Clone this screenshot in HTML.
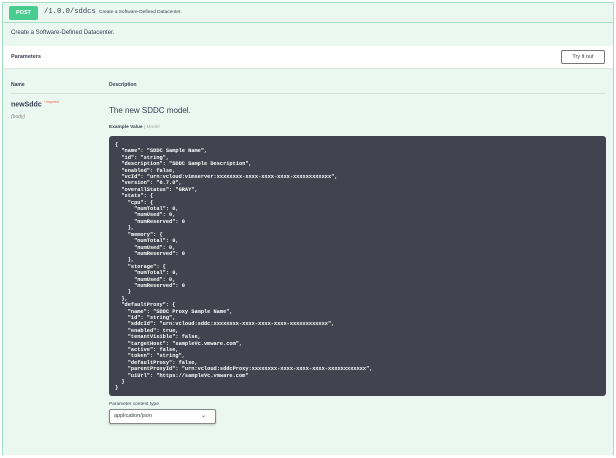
<!DOCTYPE html>
<html><head><meta charset="utf-8"><style>
*{margin:0;padding:0;box-sizing:border-box}
body{width:616px;height:458px;background:#fff;font-family:"Liberation Sans",sans-serif;position:relative;overflow:hidden;color:#3b4151}
.box{position:absolute;left:2px;top:2px;width:612px;height:453px;background:#ebf7f1;border:1px solid #a6dec2;border-bottom:none}
.hdr{position:absolute;left:0;top:0;right:0;height:20px;border-bottom:1px solid #a6dec2}
.post{position:absolute;left:6px;top:3px;width:29px;height:14px;background:#49cc90;color:#fff;font-size:5.5px;font-weight:bold;text-align:center;line-height:14px;border-radius:2px}
.path{position:absolute;left:41px;top:5px;font-family:"Liberation Mono",monospace;font-size:7.2px;color:#3b4151}
.sum{position:absolute;left:96px;top:7px;font-size:4.8px}
.desc{position:absolute;left:8px;top:27px;font-size:6px}
.pbar{position:absolute;left:0;top:43px;right:0;height:22px;background:#fff;box-shadow:0 1px 1px rgba(0,0,0,.08)}
.pbar span{position:absolute;left:8px;top:8px;font-size:5.5px;font-weight:bold}
.try{position:absolute;right:8px;top:4px;width:44px;height:14px;border:1px solid #777;border-radius:2px;font-size:5.5px;text-align:center;line-height:12px;background:#fff}
.th{position:absolute;top:79px;font-size:5px;font-weight:bold}
.line{position:absolute;left:8px;right:8px;top:90px;height:1px;background:#d3e3dc}
.nm{position:absolute;left:8px;top:97px;font-size:7px;font-weight:bold}
.nm sup{color:#e64;font-size:3.5px;font-weight:normal}
.body{position:absolute;left:8px;top:111px;font-size:5px;font-style:italic;color:#888}
.model{position:absolute;left:106px;top:103px;font-size:8px}
.ev{position:absolute;left:106px;top:122px;font-size:4.8px}
.ev b{font-weight:bold}
.code{position:absolute;left:106px;top:133px;width:497px;height:260px;background:#41444e;border-radius:3px;padding:6px 6px;font-family:"Liberation Mono",monospace;font-size:5.3px;line-height:6.4px;color:#fff;font-weight:bold;white-space:pre}
.pct{position:absolute;left:106px;top:399px;font-size:4.8px}
.sel{position:absolute;left:106px;top:406px;width:107px;height:15px;background:#fff;border:1px solid #888;border-radius:2px;font-size:5.5px;line-height:13px;padding-left:4px;box-shadow:0 1px 2px rgba(0,0,0,.2)}
.sel i{position:absolute;right:9px;top:0;font-style:normal;font-size:6px}
</style></head><body>
<div class="box">
<div class="hdr"><div class="post">POST</div><div class="path">/1.0.0/sddcs</div><div class="sum">Create a Software-Defined Datacenter.</div></div>
<div class="desc">Create a Software-Defined Datacenter.</div>
<div class="pbar"><span>Parameters</span><div class="try">Try it out</div></div>
<div class="th" style="left:8px">Name</div><div class="th" style="left:106px">Description</div>
<div class="line"></div>
<div class="nm">newSddc <sup>* required</sup></div>
<div class="body">(body)</div>
<div class="model">The new SDDC model.</div>
<div class="ev"><b>Example Value</b> <span style="color:#aaa">| Model</span></div>
<div class="code">{
  "name": "SDDC Sample Name",
  "id": "string",
  "description": "SDDC Sample Description",
  "enabled": false,
  "vcId": "urn:vcloud:vimserver:xxxxxxxx-xxxx-xxxx-xxxx-xxxxxxxxxxxx",
  "version": "6.7.0",
  "overallStatus": "GRAY",
  "stats": {
    "cpu": {
      "numTotal": 0,
      "numUsed": 0,
      "numReserved": 0
    },
    "memory": {
      "numTotal": 0,
      "numUsed": 0,
      "numReserved": 0
    },
    "storage": {
      "numTotal": 0,
      "numUsed": 0,
      "numReserved": 0
    }
  },
  "defaultProxy": {
    "name": "SDDC Proxy Sample Name",
    "id": "string",
    "sddcId": "urn:vcloud:sddc:xxxxxxxx-xxxx-xxxx-xxxx-xxxxxxxxxxxx",
    "enabled": true,
    "tenantVisible": false,
    "targetHost": "sampleVc.vmware.com",
    "active": false,
    "token": "string",
    "defaultProxy": false,
    "parentProxyId": "urn:vcloud:sddcProxy:xxxxxxxx-xxxx-xxxx-xxxx-xxxxxxxxxxxx",
    "uiUrl": "https://sampleVc.vmware.com"
  }
}</div>
<div class="pct">Parameter content type</div>
<div class="sel">application/json<i>&#8964;</i></div>
</div>
</body></html>
